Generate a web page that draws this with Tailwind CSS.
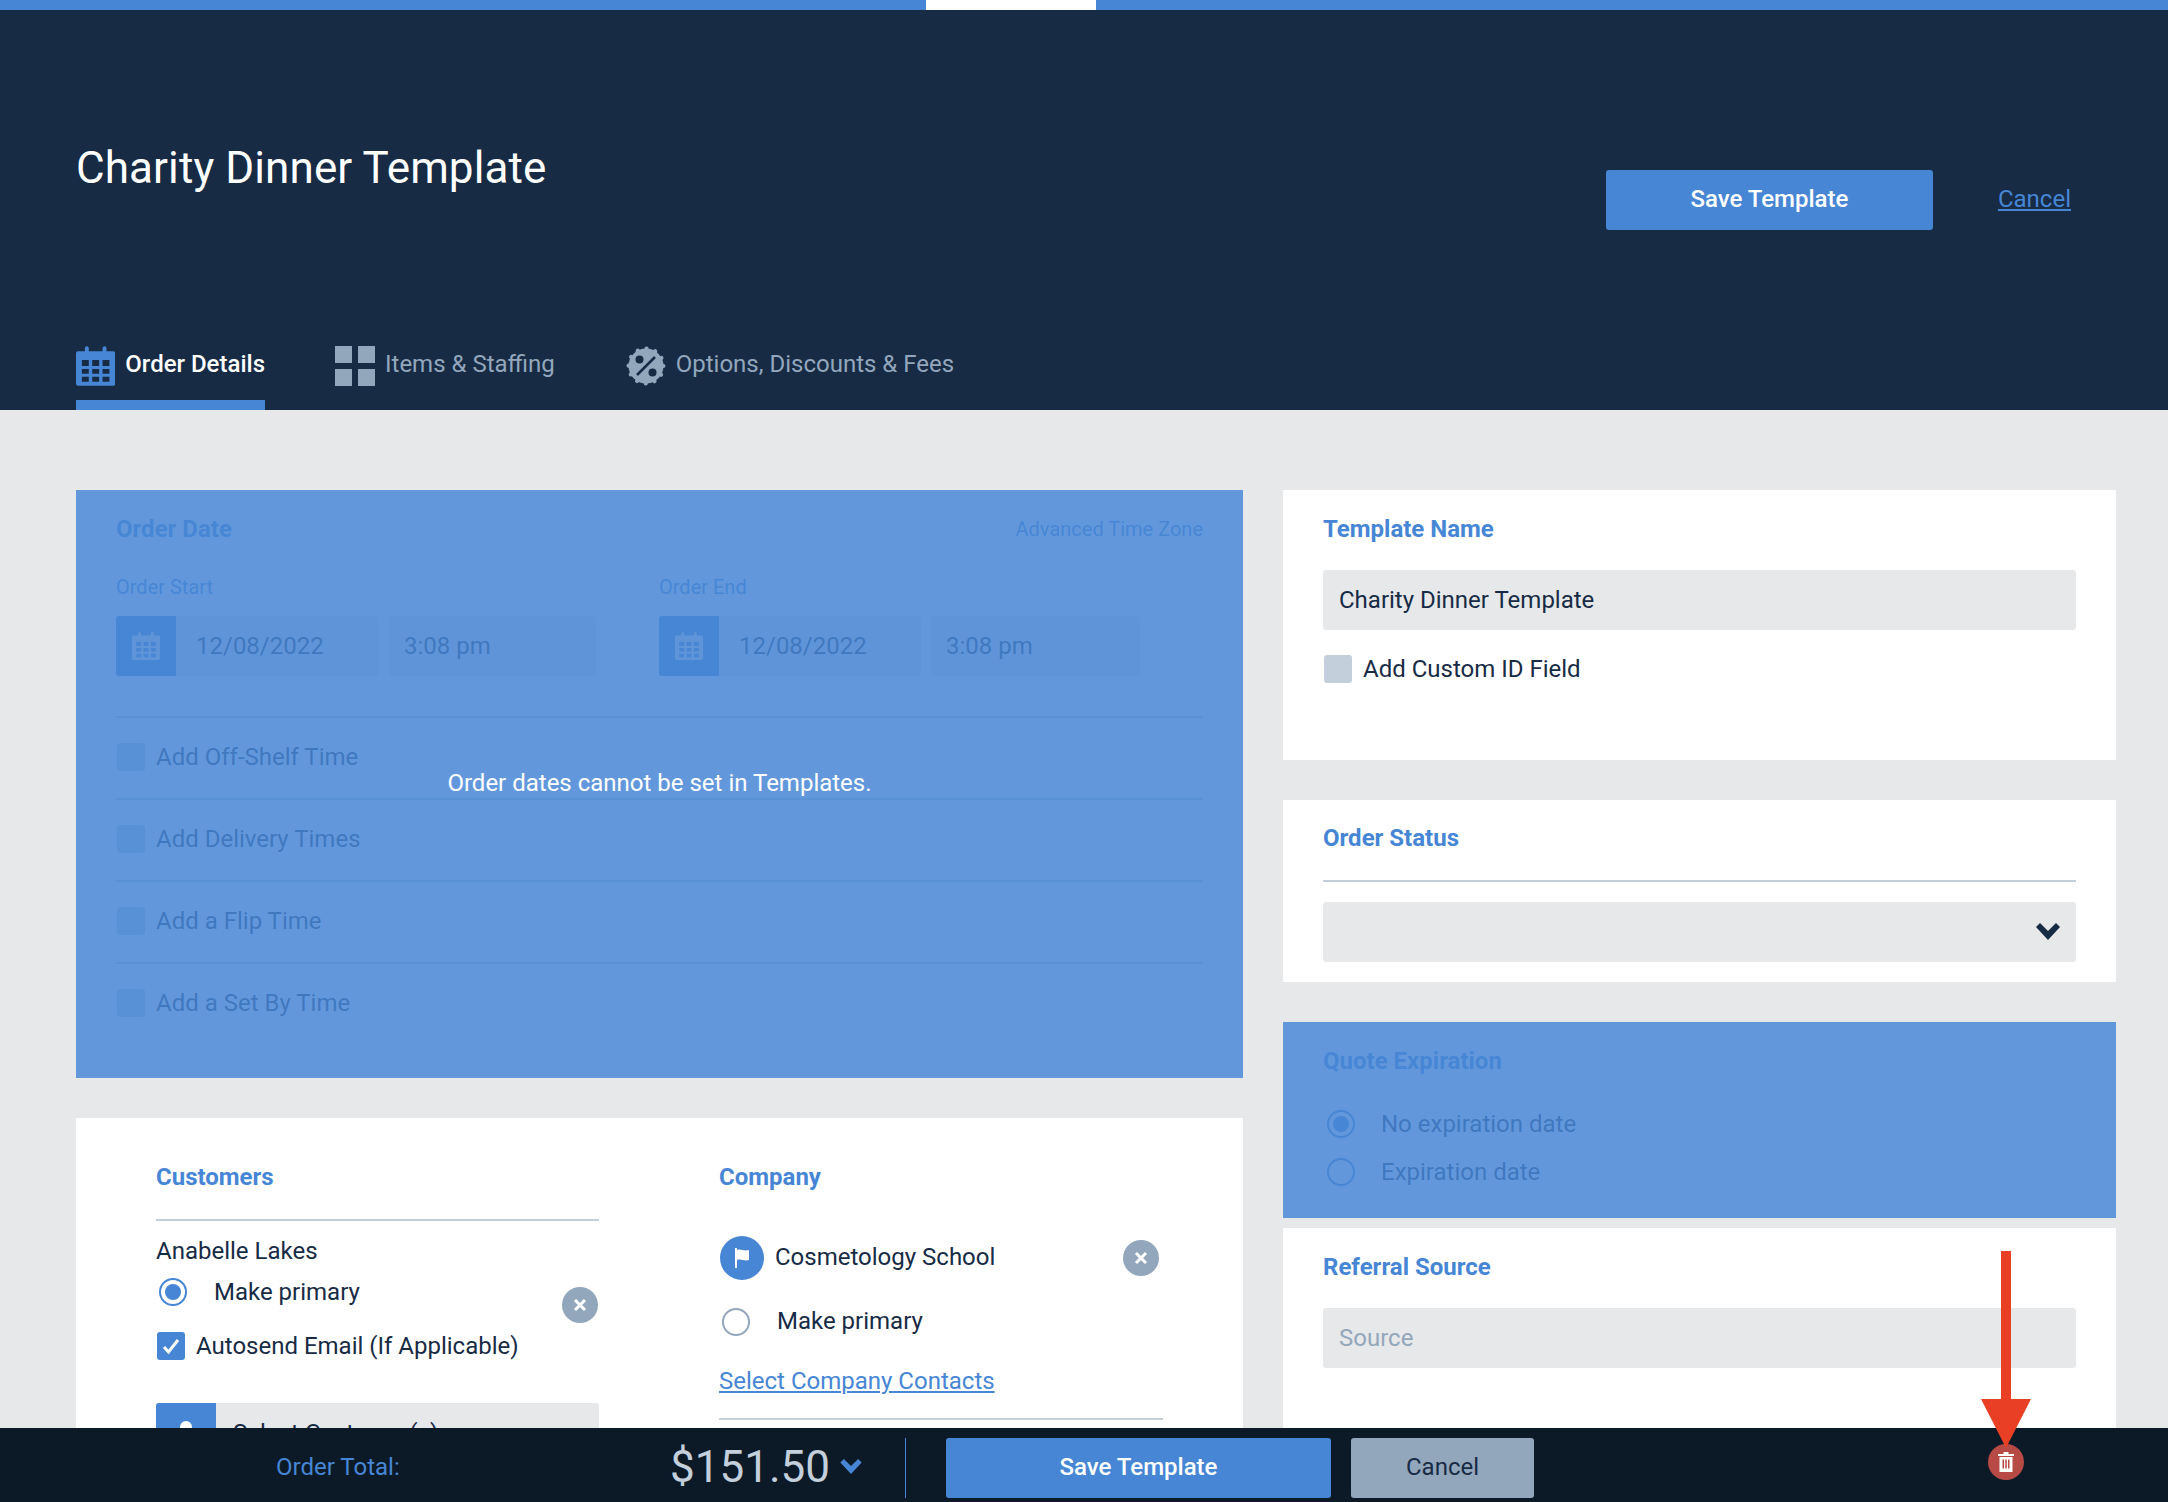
<!DOCTYPE html>
<html lang="en">
<head>
  <meta charset="UTF-8" />
  <title>Charity Dinner Template</title>
  <script src="https://cdn.jsdelivr.net/npm/@tailwindcss/browser@4"></script>
</head>
<body class="bg-[#e6e8ea] font-[Roboto,sans-serif] text-[#172b45] text-[24px]">
  <svg class="hidden">
    <symbol id="cal" viewBox="0 0 40 40">
      <path fill="currentColor" fill-rule="evenodd" d="M2 5h7V2a2 2 0 0 1 4 0v3h14V2a2 2 0 0 1 4 0v3h7a2 2 0 0 1 2 2v31a2 2 0 0 1-2 2H2a2 2 0 0 1-2-2V7a2 2 0 0 1 2-2zM6 14v6h7v-6zM16.500 14v6h7v-6zM27 14v6h7v-6zM6 23v5h7v-5zM16.500 23v5h7v-5zM27 23v5h7v-5zM6 31v5h7v-5zM16.500 31v5h7v-5zM27 31v5h7v-5z"/>
    </symbol>
  </svg>

  <div class="relative h-[1502px] overflow-hidden">
    <!-- progress bar -->
    <div class="flex h-[10px] bg-[#4686d5]">
      <div class="w-[926px]"></div>
      <div class="w-[170px] bg-white"></div>
    </div>

    <header class="flex h-[400px] flex-col bg-[#172b45] pl-[76px] pr-[97px]">
      <div class="flex justify-between">
        <h1 class="mt-[128px] h-[60px] text-[44px] leading-[60px] tracking-[0.1px] text-white">Charity Dinner Template</h1>
        <div class="mt-[160px] flex items-center gap-[65px]">
          <button class="h-[60px] w-[327px] rounded-[3px] bg-[#4686d5] pb-[2px] text-[24px] font-medium text-white">Save Template</button>
          <a class="pb-[2px] text-[24px] text-[#4686d5] underline">Cancel</a>
        </div>
      </div>
      <nav class="mt-auto flex gap-[70px]">
        <div class="flex h-[64px] w-[189px] gap-[10px] border-b-[10px] border-[#4686d5]">
          <svg class="h-[40px] w-[40px] text-[#4686d5]"><use href="#cal"/></svg>
          <span class="h-[36px] text-[24px] leading-[36px] font-medium whitespace-nowrap text-white">Order Details</span>
        </div>
        <div class="flex h-[64px] gap-[10px]">
          <div class="grid h-[40px] w-[40px] grid-cols-2 gap-[6px]">
            <i class="bg-[#93a7bc]"></i><i class="bg-[#93a7bc]"></i><i class="bg-[#93a7bc]"></i><i class="bg-[#93a7bc]"></i>
          </div>
          <span class="h-[36px] text-[24px] leading-[36px] text-[#93a7bc]">Items &amp; Staffing</span>
        </div>
        <div class="flex h-[64px] gap-[10px]">
          <svg class="ml-[1px] h-[40px] w-[40px]" viewBox="0 0 40 40">
            <circle cx="20" cy="20" r="17.500" fill="#93a7bc" stroke="#93a7bc" stroke-width="4" stroke-linecap="round" stroke-dasharray="0.100 9.060"/>
            <circle cx="13.500" cy="13.500" r="4" fill="#172b45"/>
            <circle cx="26.500" cy="26.500" r="4" fill="#172b45"/>
            <path d="M11 29 29 11" stroke="#172b45" stroke-width="2.500"/>
          </svg>
          <span class="h-[36px] text-[24px] leading-[36px] text-[#93a7bc]">Options, Discounts &amp; Fees</span>
        </div>
      </nav>
    </header>

    <main class="flex gap-[40px] pl-[76px] pt-[80px]">
      <div class="flex w-[1167px] flex-col gap-[40px]">
        <!-- order date, disabled in templates -->
        <section class="relative h-[588px] bg-white px-[40px] pt-[19px]">
          <div class="flex h-[40px] items-center justify-between">
            <h2 class="font-bold text-[#4686d5]">Order Date</h2>
            <a class="text-[20px] text-[#4686d5]">Advanced Time Zone</a>
          </div>
          <div class="mt-[24px] flex h-[28px] items-center text-[20px] text-[#4686d5]">
            <span class="w-[543px]">Order Start</span><span>Order End</span>
          </div>
          <div class="mt-[15px] flex">
            <div class="flex h-[60px] w-[543px]">
              <div class="flex w-[60px] items-center justify-center rounded-l-[3px] bg-[#4686d5]"><svg class="h-[28px] w-[28px] text-[#e6e8ea]"><use href="#cal"/></svg></div>
              <div class="flex w-[202px] items-center rounded-r-[3px] bg-[#e6e8ea] pl-[20px]">12/08/2022</div>
              <div class="ml-[11px] flex w-[207px] items-center rounded-[3px] bg-[#e6e8ea] pl-[15px]">3:08 pm</div>
            </div>
            <div class="flex h-[60px]">
              <div class="flex w-[60px] items-center justify-center rounded-l-[3px] bg-[#4686d5]"><svg class="h-[28px] w-[28px] text-[#e6e8ea]"><use href="#cal"/></svg></div>
              <div class="flex w-[202px] items-center rounded-r-[3px] bg-[#e6e8ea] pl-[20px]">12/08/2022</div>
              <div class="ml-[10px] flex w-[209px] items-center rounded-[3px] bg-[#e6e8ea] pl-[15px]">3:08 pm</div>
            </div>
          </div>
          <div class="mt-[40px] border-t-2 border-[#c3cfdb]">
            <div class="flex h-[82px] items-center border-b-2 border-[#c3cfdb] pb-[2px] pl-[1px]"><i class="h-[28px] w-[28px] rounded-[3px] bg-[#c3cfdb]"></i><span class="ml-[11px]">Add Off-Shelf Time</span></div>
            <div class="flex h-[82px] items-center border-b-2 border-[#c3cfdb] pb-[2px] pl-[1px]"><i class="h-[28px] w-[28px] rounded-[3px] bg-[#c3cfdb]"></i><span class="ml-[11px]">Add Delivery Times</span></div>
            <div class="flex h-[82px] items-center border-b-2 border-[#c3cfdb] pb-[2px] pl-[1px]"><i class="h-[28px] w-[28px] rounded-[3px] bg-[#c3cfdb]"></i><span class="ml-[11px]">Add a Flip Time</span></div>
            <div class="flex h-[80px] items-center pb-[2px] pl-[1px]"><i class="h-[28px] w-[28px] rounded-[3px] bg-[#c3cfdb]"></i><span class="ml-[11px]">Add a Set By Time</span></div>
          </div>
          <div class="absolute inset-0 flex items-center justify-center bg-[#4686d5]/85 pb-[2px] text-white">Order dates cannot be set in Templates.</div>
        </section>

        <section class="flex h-[400px] bg-white pl-[80px] pt-[39px]">
          <div class="w-[443px]">
            <h2 class="flex h-[40px] items-center font-bold text-[#4686d5]">Customers</h2>
            <div class="mt-[22px] border-t-2 border-[#c3cfdb]"></div>
            <div class="relative">
              <p class="mt-[15px] flex h-[30px] items-center">Anabelle Lakes</p>
              <div class="mt-[11px] flex h-[30px] items-center pl-[3px]">
                <span class="flex h-[28px] w-[28px] items-center justify-center rounded-full border-2 border-[#4686d5]"><i class="h-[16px] w-[16px] rounded-full bg-[#4686d5]"></i></span>
                <span class="ml-[27px]">Make primary</span>
              </div>
              <div class="mt-[24px] flex h-[30px] items-center pl-[1px]">
                <span class="flex h-[28px] w-[28px] items-center justify-center rounded-[3px] bg-[#4686d5]">
                  <svg class="h-[20px] w-[20px]" viewBox="0 0 20 20"><path d="M3 11l4.500 5L17 4" fill="none" stroke="#fff" stroke-width="3"/></svg>
                </span>
                <span class="ml-[11px]">Autosend Email (If Applicable)</span>
              </div>
              <button class="absolute right-[1px] top-[51px] flex h-[36px] w-[36px] items-center justify-center rounded-full bg-[#93a7bc]">
                <svg class="h-[16px] w-[16px]" viewBox="0 0 16 16"><path d="M3 3l10 10M13 3L3 13" stroke="#fff" stroke-width="3"/></svg>
              </button>
            </div>
            <div class="mt-[42px] flex h-[60px] rounded-[3px] bg-[#e6e8ea]">
              <div class="flex w-[60px] justify-center rounded-l-[3px] bg-[#4686d5] pt-[17px]">
                <svg class="h-[28px] w-[22px]" viewBox="0 0 22 28"><circle cx="11" cy="7" r="6" fill="#fff"/><path d="M2 26c0-8 4-11 9-11s9 3 9 11z" fill="#fff"/></svg>
              </div>
              <span class="ml-[17px] flex items-center">Select Customer(s)</span>
            </div>
          </div>

          <div class="ml-[120px] w-[444px]">
            <h2 class="flex h-[40px] items-center font-bold text-[#4686d5]">Company</h2>
            <div class="mt-[39px] flex h-[44px] items-center justify-between pr-[4px]">
              <div class="flex items-center pb-[2px]">
                <span class="mt-[2px] ml-[1px] flex h-[44px] w-[44px] items-center justify-center rounded-full bg-[#4686d5]">
                  <svg class="h-[20px] w-[16px]" viewBox="0 0 16 20"><path d="M1 0h2v20H1zM3 2c4-1.500 7 1.500 12 0v10c-5 1.500-8-1.500-12 0z" fill="#fff"/></svg>
                </span>
                <span class="ml-[11px]">Cosmetology School</span>
              </div>
              <button class="flex h-[36px] w-[36px] items-center justify-center rounded-full bg-[#93a7bc]">
                <svg class="h-[16px] w-[16px]" viewBox="0 0 16 16"><path d="M3 3l10 10M13 3L3 13" stroke="#fff" stroke-width="3"/></svg>
              </button>
            </div>
            <div class="mt-[26px] flex h-[32px] items-center pl-[3px]">
              <span class="h-[28px] w-[28px] rounded-full border-2 border-[#93a7bc]"></span>
              <span class="ml-[27px] pb-[2px]">Make primary</span>
            </div>
            <a class="mt-[28px] block h-[30px] leading-[30px] text-[#4686d5] underline">Select Company Contacts</a>
            <div class="mt-[22px] border-t-2 border-[#c3cfdb]"></div>
          </div>
        </section>
      </div>

      <div class="flex w-[833px] flex-col">
        <section class="h-[270px] bg-white px-[40px] pt-[19px]">
          <h2 class="flex h-[40px] items-center font-bold text-[#4686d5]">Template Name</h2>
          <div class="mt-[21px] flex h-[60px] items-center rounded-[3px] bg-[#e6e8ea] pl-[16px]">Charity Dinner Template</div>
          <div class="mt-[25px] flex h-[28px] items-center pl-[1px]">
            <i class="h-[28px] w-[28px] rounded-[3px] bg-[#c3cfdb]"></i>
            <span class="ml-[11px]">Add Custom ID Field</span>
          </div>
        </section>

        <section class="mt-[40px] h-[182px] bg-white px-[40px] pt-[18px]">
          <h2 class="flex h-[40px] items-center font-bold text-[#4686d5]">Order Status</h2>
          <div class="mt-[22px] border-t-2 border-[#c3cfdb]"></div>
          <div class="mt-[20px] flex h-[60px] items-center justify-end rounded-[3px] bg-[#e6e8ea] pr-[16px]">
            <svg class="h-[18px] w-[24px]" viewBox="0 0 24 18"><path d="M0 4l4-4 8 8 8-8 4 4-12 13z" fill="#172b45"/></svg>
          </div>
        </section>

        <section class="relative mt-[40px] h-[196px] bg-white px-[40px] pt-[19px]">
          <h2 class="flex h-[40px] items-center font-bold text-[#4686d5]">Quote Expiration</h2>
          <div class="mt-[29px] flex h-[28px] items-center pl-[4px]">
            <span class="flex h-[28px] w-[28px] items-center justify-center rounded-full border-2 border-[#4686d5]"><i class="h-[16px] w-[16px] rounded-full bg-[#4686d5]"></i></span>
            <span class="ml-[26px]">No expiration date</span>
          </div>
          <div class="mt-[20px] flex h-[28px] items-center pl-[4px]">
            <span class="h-[28px] w-[28px] rounded-full border-2 border-[#4686d5]"></span>
            <span class="ml-[26px]">Expiration date</span>
          </div>
          <div class="absolute inset-0 bg-[#4686d5]/85"></div>
        </section>

        <section class="mt-[10px] h-[300px] bg-white px-[40px] pt-[19px]">
          <h2 class="flex h-[40px] items-center font-bold text-[#4686d5]">Referral Source</h2>
          <div class="mt-[21px] flex h-[60px] items-center rounded-[3px] bg-[#e6e8ea] pl-[16px] text-[#93a7bc]">Source</div>
        </section>
      </div>
    </main>

    <footer class="absolute bottom-0 left-0 flex h-[74px] w-full bg-[#0c1a28] pt-[10px]">
      <div class="flex h-[60px] w-[905px] items-center pb-[2px] pl-[276px]">
        <span class="w-[394px] text-[#4686d5]">Order Total:</span>
        <span class="text-[44px] text-[#c3cfdb]">$151.50</span>
        <svg class="ml-[10px] h-[16px] w-[22px]" viewBox="0 0 24 18"><path d="M0 4l4-4 8 8 8-8 4 4-12 13z" fill="#4686d5"/></svg>
      </div>
      <div class="h-[60px] w-[1px] bg-[#4686d5]"></div>
      <button class="ml-[40px] h-[60px] w-[385px] rounded-[3px] bg-[#4686d5] pb-[2px] text-[24px] font-medium text-white">Save Template</button>
      <button class="ml-[20px] h-[60px] w-[183px] rounded-[3px] bg-[#93a7bc] pb-[2px] text-[24px] text-[#172b45]">Cancel</button>
      <button class="ml-[454px] mt-[6px] flex h-[36px] w-[36px] items-center justify-center rounded-full bg-[#b84a46]">
        <svg class="h-[20px] w-[16px]" viewBox="0 0 16 20"><path fill="#fff" fill-rule="evenodd" d="M5.500 0h5v2H16v2H0V2h5.500zM1.500 5h13v15h-13zM4.500 7.500v9h1.500v-9zM7.250 7.500v9h1.500v-9zM10 7.500v9h1.500v-9z"/></svg>
      </button>
    </footer>

    <!-- annotation arrow -->
    <svg class="absolute left-[1976px] top-[1251px] h-[200px] w-[60px]" viewBox="0 0 60 200">
      <path d="M25 0h10v148h20l-25 49-25-49h20z" fill="#e94025"/>
    </svg>
  </div>
</body>
</html>
